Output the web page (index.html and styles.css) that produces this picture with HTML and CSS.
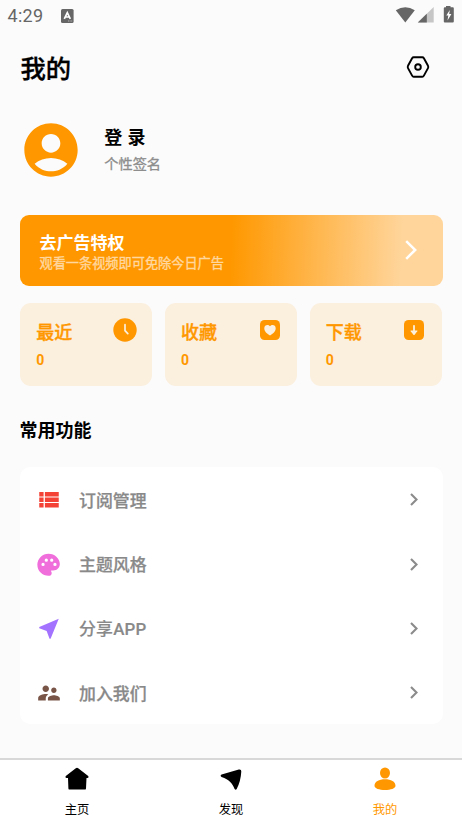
FILE: index.html
```html
<!DOCTYPE html>
<html lang="zh-CN">
<head>
<meta charset="utf-8">
<meta name="viewport" content="width=device-width, initial-scale=1">
<title>我的</title>
<link rel="stylesheet" href="styles.css">
</head>
<body>
<div class="app">
  <div class="status">
    <span class="time">4:29</span>
    <svg class="badge-a" width="13" height="14" viewBox="0 0 13 14"><rect width="12.6" height="14" rx="1.5" fill="#666"/><path d="M3.3 9.8 6.3 3.6 9.3 9.8M4.5 8h3.6" fill="none" stroke="#fff" stroke-width="1.7"/><path d="M7 12h4.5" stroke="#ccc" stroke-width=".8" stroke-dasharray="1 .6"/></svg>
    <svg class="signals" width="60" height="18" viewBox="0 0 60 18"><path d="M.8 4.2Q10.3-1.8 19.8 4.2L10.3 16.4Z" fill="#666"/><path d="M38.700 1v15.500H22.800z" fill="#c6c6c6"/><path d="M31.800 7.700v8.800h-9z" fill="#666"/><path d="M51 1.300V0h4.500v1.300h2.300q1 0 1 1v13.200q0 1-1 1h-8q-1 0-1-1V2.300q0-1 1-1z" fill="#666"/><path d="M54.800 4 51.300 9.500h2l-.8 5 3.900-6.400h-2.200z" fill="#fff"/></svg>
  </div>
  <header class="header">
    <h1>我的</h1>
    <svg width="24" height="24" viewBox="0 0 24 24" fill="none" stroke="#000" stroke-width="1.900"><path d="M7.700 2.300h8.600q1 0 1.600 1l4.100 7.500q.6 1.200 0 2.300l-4.100 7.500q-.6 1.100-1.600 1.100H7.700q-1 0-1.600-1.100L2 13.100q-.6-1.100 0-2.300l4.100-7.500q.6-1 1.600-1z"/><circle cx="12" cy="12" r="2.800"/></svg>
  </header>
  <section class="profile">
    <svg width="64" height="64" viewBox="0 0 24 24"><path fill="#ff9800" d="M12 2C6.480 2 2 6.480 2 12s4.480 10 10 10 10-4.480 10-10S17.520 2 12 2zm0 4c1.930 0 3.500 1.570 3.500 3.500S13.930 13 12 13s-3.500-1.570-3.500-3.500S10.070 6 12 6zm0 14c-2.030 0-4.430-.82-6.140-2.880C7.550 15.800 9.680 15 12 15s4.450.8 6.140 2.120C16.430 19.180 14.030 20 12 20z"/></svg>
    <div class="who"><div class="name">登 录</div><div class="sign">个性签名</div></div>
  </section>
  <section class="banner">
    <div><div class="b-title">去广告特权</div><div class="b-sub">观看一条视频即可免除今日广告</div></div>
    <svg width="12" height="20" viewBox="0 0 12 20"><path d="m1.200 1.200 9 8.800-9 8.800" fill="none" stroke="#fff" stroke-width="2.500"/></svg>
  </section>
  <section class="stats">
    <div class="stat"><div class="row"><h2>最近</h2><svg width="24" height="24" viewBox="0 0 24 24"><circle cx="12" cy="12" r="11.700" fill="#ff9800"/><path d="M12 6.700v6l2.800 3" fill="none" stroke="#fbefde" stroke-width="1.700" stroke-linecap="round" stroke-linejoin="round"/></svg></div><div class="count">0</div></div>
    <div class="stat"><div class="row"><h2>收藏</h2><svg width="24" height="24" viewBox="0 0 24 24"><rect x="2" y="2" width="20" height="20" rx="4.500" fill="#ff9800"/><path d="M12 17.600C9 15.700 6.300 13.500 6.300 10.300 6.300 6.800 10.200 6 12 8.300c1.800-2.300 5.700-1.500 5.700 2 0 3.200-2.700 5.400-5.700 7.300z" fill="#fbefde"/></svg></div><div class="count">0</div></div>
    <div class="stat"><div class="row"><h2>下载</h2><svg width="24" height="24" viewBox="0 0 24 24"><rect x="2" y="2" width="20" height="20" rx="4.500" fill="#ff9800"/><path d="M12 7.800V13" stroke="#fbefde" stroke-width="1.800" stroke-linecap="round"/><path d="M9 12.500h6q.8 0 .3.800L12.600 16.800q-.6.600-1.200 0L8.700 13.300q-.5-.8.300-.8z" fill="#fbefde"/></svg></div><div class="count">0</div></div>
  </section>
  <h3 class="section-title">常用功能</h3>
  <ul class="menu">
    <li><svg width="26" height="26" viewBox="0 0 24 24" fill="#f44336"><path d="M3 4.600h4v4.200H3zM8.200 4.600H21v4.200H8.200zM3 9.700h4v4.200H3zM8.200 9.700H21v4.200H8.200zM3 14.800h4V19H3zM8.200 14.800H21V19H8.200z"/></svg><span>订阅管理</span><svg class="chev" width="8" height="13" viewBox="0 0 8 13"><path d="m1 1 5.500 5.500L1 12"/></svg></li>
    <li><svg width="26" height="26" viewBox="0 0 24 24" fill="#ef6edb"><path d="M11.500 1.500a10.250 10.250 0 0 0 0 20.500c1.880 0 3-1.120 3-2.500 0-.61-.23-1.200-.64-1.670-.08-.1-.13-.21-.13-.33 0-.28.220-.5.500-.5H16c3.310 0 6-2.690 6-6 0-4.960-4.490-9.500-10.500-9.500zm-5 11.500a1.500 1.500 0 1 1 0-3 1.500 1.500 0 0 1 0 3zm3-4a1.500 1.500 0 1 1 0-3 1.500 1.500 0 0 1 0 3zm5 0a1.500 1.500 0 1 1 0-3 1.500 1.500 0 0 1 0 3zm3 4a1.500 1.500 0 1 1 0-3 1.500 1.500 0 0 1 0 3z"/></svg><span>主题风格</span><svg class="chev" width="8" height="13" viewBox="0 0 8 13"><path d="m1 1 5.500 5.500L1 12"/></svg></li>
    <li><svg width="26" height="26" viewBox="0 0 24 24" fill="#a373ff"><path d="M21 2.500 3 10.230v.98l6.840 2.650L12.480 21h.98L21 2.500z"/></svg><span class="latin">分享APP</span><svg class="chev" width="8" height="13" viewBox="0 0 8 13"><path d="m1 1 5.500 5.500L1 12"/></svg></li>
    <li><svg width="26" height="26" viewBox="0 0 24 24" fill="#795548"><path d="M16.500 12c1.380 0 2.490-1.120 2.490-2.500S17.880 7 16.500 7 14 8.120 14 9.500s1.120 2.500 2.500 2.500zM9 11c1.660 0 2.990-1.340 2.990-3S10.660 5 9 5 6 6.340 6 8s1.340 3 3 3zm7.500 3c-1.830 0-5.500.92-5.500 2.750V19h11v-2.250c0-1.830-3.670-2.750-5.500-2.750zM9 13c-2.330 0-7 1.170-7 3.500V19h7v-2.250c0-.85.330-2.340 2.370-3.470C10.500 13.100 9.660 13 9 13z"/></svg><span>加入我们</span><svg class="chev" width="8" height="13" viewBox="0 0 8 13"><path d="m1 1 5.500 5.500L1 12"/></svg></li>
  </ul>
  <nav class="tabs">
    <a><svg width="26" height="26" viewBox="0 0 26 26"><path d="M11.800 2.300q1.200-.9 2.400 0l10 7.800q1.200 1.500-.6 1.900h-1.100l-.5 10.400q-.1 1.200-1.300 1.200H5.700q-1.200 0-1.300-1.200L4 12H2.400q-1.800-.4-.6-1.900z"/></svg><span>主页</span></a>
    <a><svg width="26" height="26" viewBox="0 0 26 26"><path d="M3.600 8.500 20.800 3.500Q23.500 3 23.300 5.500 22.800 15 18.700 23q-1 1.500-2.100 0C14.500 17.500 11.500 13.500 3.500 11q-1.800-1.300.1-2.500z"/></svg><span>发现</span></a>
    <a class="active"><svg width="26" height="26" viewBox="0 0 26 26"><ellipse cx="13" cy="7" rx="5" ry="5.500"/><path d="M13 13.200c6 0 10.500 2.300 10.500 6.500 0 2.800-4.800 4.200-10.500 4.200S2.500 22.500 2.500 19.700c0-4.200 4.500-6.500 10.500-6.500z"/></svg><span>我的</span></a>
  </nav>
</div>
</body>
</html>
```

FILE: styles.css
```css
* { box-sizing: border-box; margin: 0; padding: 0; }
body { background: #fbfbfb; color: #000; font-family: Roboto, "Noto Sans CJK SC", sans-serif; }
svg { display: block; flex: none; }
.app { width: 462px; height: 823px; display: flex; flex-direction: column; overflow: hidden; }
.status { height: 32px; display: flex; align-items: center; padding: 0 7px 0 7.5px; color: #666; }
.time { font-size: 18px; line-height: 32px; width: 53.500px; letter-spacing: .3px; }
.signals { margin: -2px 0 0 auto; }
.badge-a { margin-top: -1px; }
.header { height: 74px; display: flex; align-items: center; justify-content: space-between; padding: 0 32px 0 20.500px; }
.header svg { margin-top: -5px; }
h1 { font-size: 25.300px; font-weight: 500; line-height: 36px; margin-top: 2px; -webkit-text-stroke: .35px currentColor; }
.profile { height: 87px; display: flex; align-items: center; gap: 21px; padding-left: 19.300px; }
.who { padding-top: 2px; }
.name { font-size: 18px; font-weight: 700; line-height: 26px; word-spacing: .8px; }
.sign { font-size: 14.200px; line-height: 26px; color: #8d8d8d; -webkit-text-stroke: .3px currentColor; }
.banner { margin: 22px 19.500px 0; height: 70.500px; border-radius: 9px; padding: 0 26px 0 20px; display: flex; align-items: center; justify-content: space-between; background: linear-gradient(92deg, #ff9800 50%, #ffd59b 90%); }
.b-title { color: #fff; font-size: 17px; font-weight: 700; line-height: 21px; margin-top: 6px; }
.b-sub { color: #ffd79f; font-size: 13.180px; line-height: 20px; -webkit-text-stroke: .35px currentColor; }
.stats { display: grid; grid-template-columns: repeat(3, 1fr); gap: 12.700px; margin: 17px 20.300px 0; height: 83px; }
.stat { background: #fbefde; border-radius: 11px; padding: 15.500px 15.500px 0 16px; color: #ff9800; }
.row { display: flex; justify-content: space-between; height: 28px; }
h2 { font-size: 18px; font-weight: 500; line-height: 30px; -webkit-text-stroke: .35px currentColor; }
.count { font-size: 14px; font-weight: 700; line-height: 28px; }
.section-title { margin: 32px 0 0 19.500px; font-size: 18px; font-weight: 700; line-height: 26px; }
.menu { list-style: none; margin: 23px 19.500px 0; height: 257.500px; background: #fff; border-radius: 10px; display: grid; grid-template-rows: repeat(4, 1fr); }
.menu li { display: flex; align-items: center; padding: 3px 24.500px 0 16.500px; }
.menu span { margin-left: 17px; color: #898989; font-size: 16.900px; font-weight: 500; line-height: 26px; padding-top: 1px; -webkit-text-stroke: .25px currentColor; }
.menu .latin { letter-spacing: .2px; -webkit-text-stroke-width: .15px; padding-top: 0; }
.chev { margin-left: auto; margin-top: -1px; fill: none; stroke: #8b8b8b; stroke-width: 2.100; }
.tabs { margin-top: auto; height: 65px; background: #fff; border-top: 2px solid #d8d8d8; display: grid; grid-template-columns: repeat(3, 1fr); }
.tabs a { display: flex; flex-direction: column; align-items: center; padding-top: 6px; font-size: 12.300px; line-height: 20px; }
.tabs span { margin-top: 8px; }
.tabs svg { fill: #000; }
.active { color: #ff9800; }
.tabs .active svg { fill: #ff9800; }
```
